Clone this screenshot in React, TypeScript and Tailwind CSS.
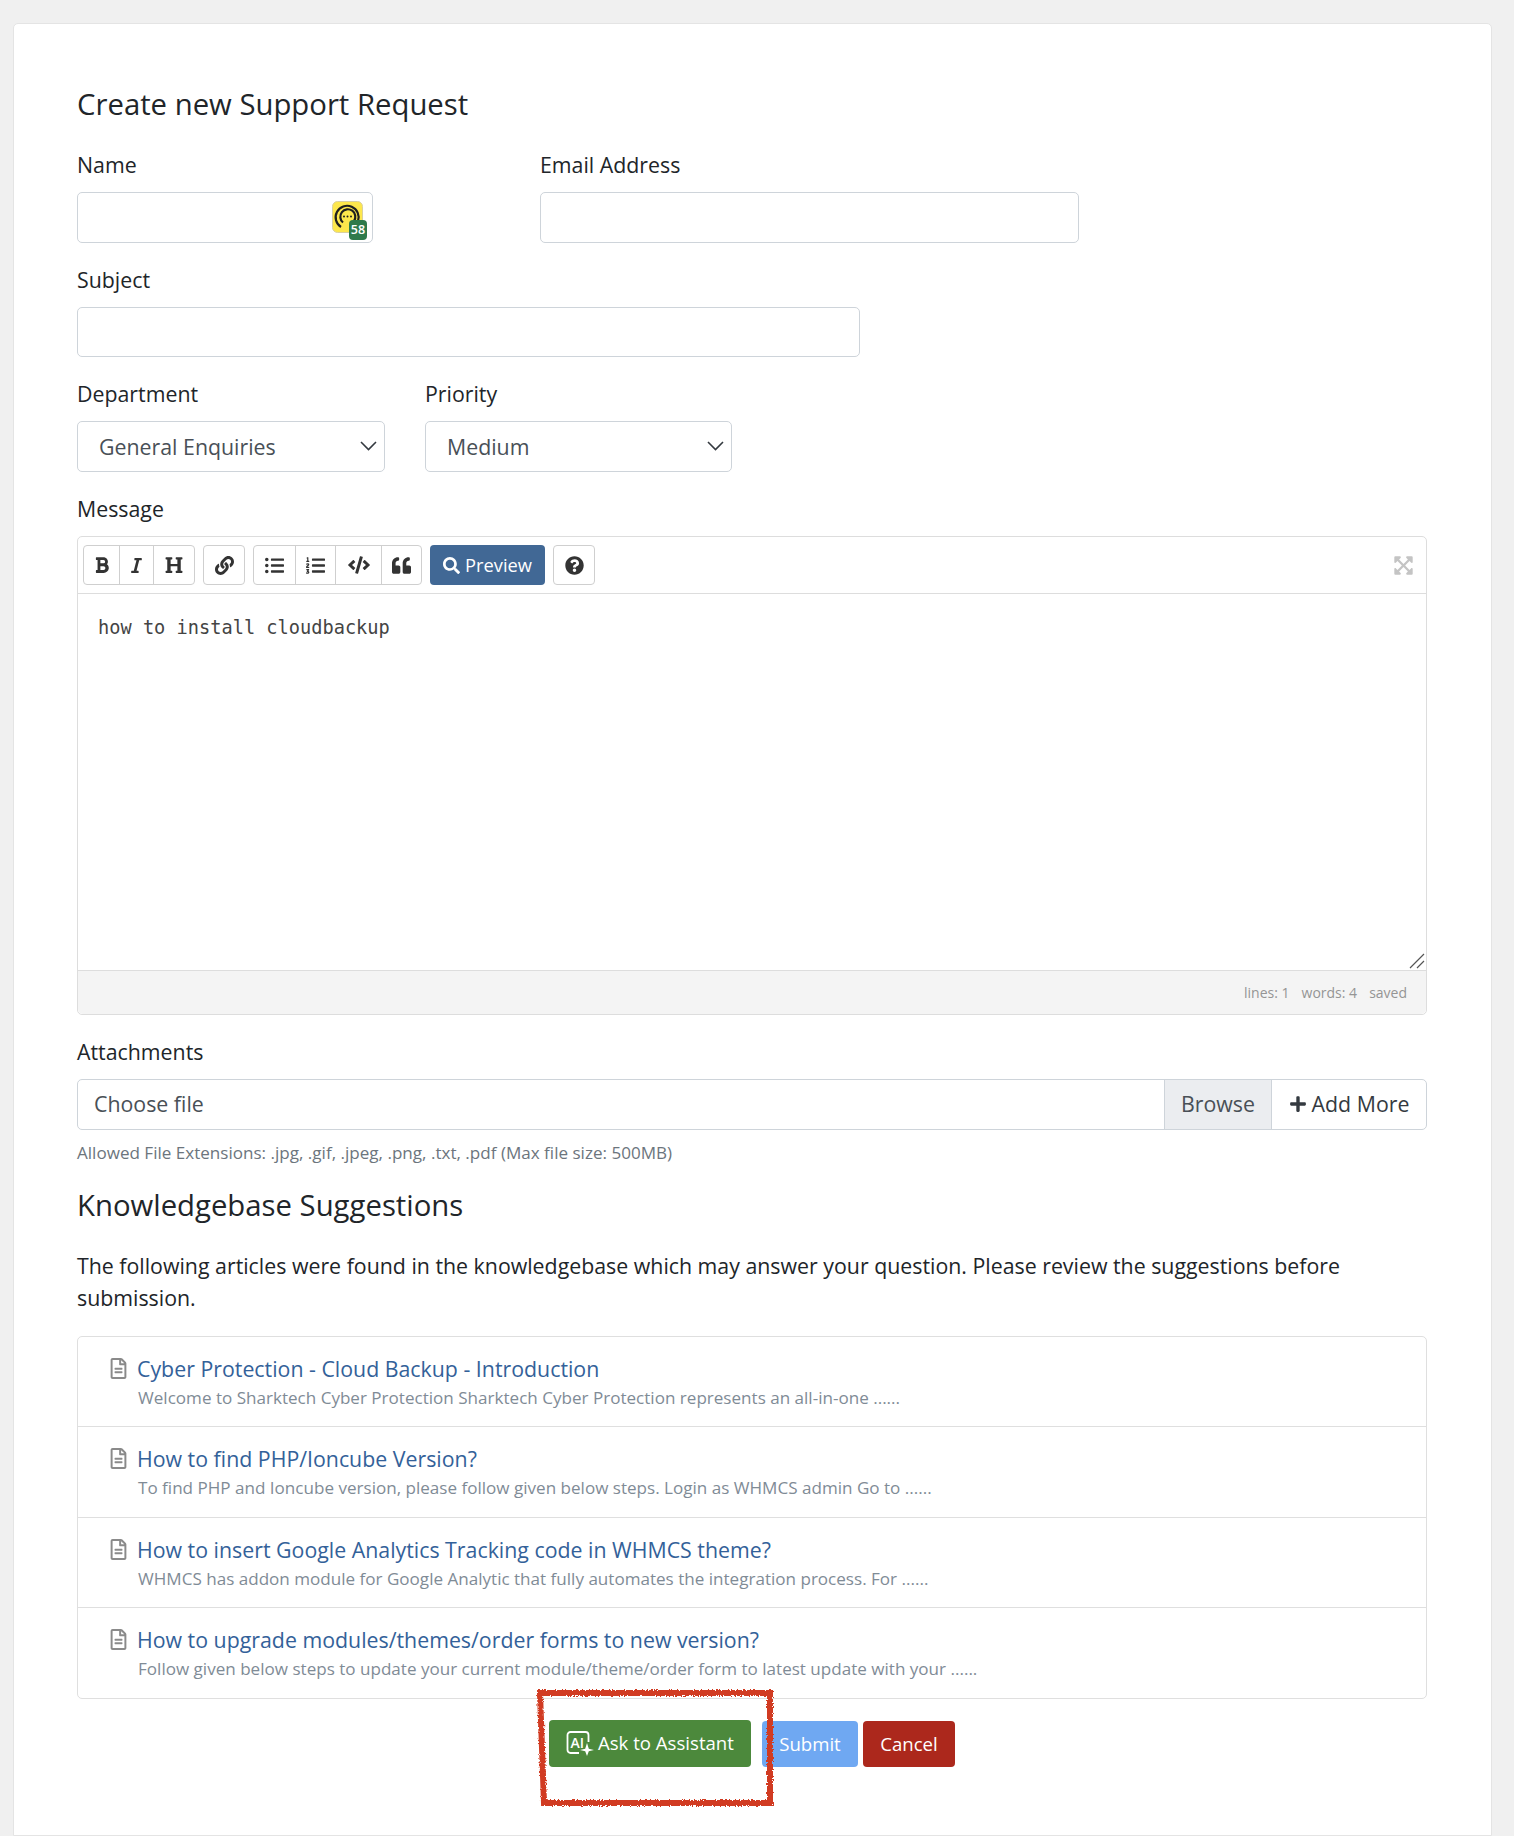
import { FaBold, FaItalic, FaHeading, FaLink, FaListUl, FaListOl, FaCode, FaQuoteLeft, FaSearch, FaQuestionCircle, FaExpandArrowsAlt, FaPlus, FaRegFileAlt } from "react-icons/fa";
import type { ReactNode } from "react";

const ARTICLES = [
  {
    title: "Cyber Protection - Cloud Backup - Introduction",
    desc: "Welcome to Sharktech Cyber Protection Sharktech Cyber Protection represents an all-in-one ......",
  },
  {
    title: "How to find PHP/Ioncube Version?",
    desc: "To find PHP and Ioncube version, please follow given below steps. Login as WHMCS admin Go to ......",
  },
  {
    title: "How to insert Google Analytics Tracking code in WHMCS theme?",
    desc: "WHMCS has addon module for Google Analytic that fully automates the integration process. For ......",
  },
  {
    title: "How to upgrade modules/themes/order forms to new version?",
    desc: "Follow given below steps to update your current module/theme/order form to latest update with your ......",
  },
];

function Label({ children }: { children: ReactNode }) {
  return <label className="mb-[11px] block h-[32px] text-[21.33px] leading-[32px] text-[#212529]">{children}</label>;
}

function Select({ value }: { value: string }) {
  return (
    <div className="flex h-[51px] items-center justify-between rounded-[5px] border border-[#ced4da] bg-white pl-[21px] pr-[7px] text-[21.33px] text-[#495057]">
      <span>{value}</span>
      <svg width="17" height="10" viewBox="0 0 17 10" fill="none" className="mb-[2px]">
        <path d="M1 1 L8.5 8.5 L16 1" stroke="#343a40" strokeWidth="1.6" />
      </svg>
    </div>
  );
}

function ToolButton({ children, className = "" }: { children: ReactNode; className?: string }) {
  return (
    <span className={`flex h-full items-center justify-center border-r border-[#cfcfcf] text-[#333] last:border-r-0 ${className}`}>
      {children}
    </span>
  );
}

function ToolGroup({ children, className = "" }: { children: ReactNode; className?: string }) {
  return <div className={`flex h-[40px] rounded-[4px] border border-[#cfcfcf] bg-white ${className}`}>{children}</div>;
}

function Toolbar() {
  return (
    <div className="flex h-[57px] items-center border-b border-[#dddddd] pl-[5px] pr-[12px]">
      <ToolGroup>
        <ToolButton className="w-[36px]"><FaBold className="size-[18px]" /></ToolButton>
        <ToolButton className="w-[34px]"><FaItalic className="size-[17px]" /></ToolButton>
        <ToolButton className="w-[40px]"><FaHeading className="size-[18px]" /></ToolButton>
      </ToolGroup>
      <ToolGroup className="ml-[8px]">
        <ToolButton className="w-[40px]"><FaLink className="size-[19px]" /></ToolButton>
      </ToolGroup>
      <ToolGroup className="ml-[8px]">
        <ToolButton className="w-[42px]"><FaListUl className="size-[19px]" /></ToolButton>
        <ToolButton className="w-[40px]"><FaListOl className="size-[19px]" /></ToolButton>
        <ToolButton className="w-[46px]"><FaCode className="size-[22px]" /></ToolButton>
        <ToolButton className="w-[39px]"><FaQuoteLeft className="size-[19px]" /></ToolButton>
      </ToolGroup>
      <div className="ml-[8px] flex h-[40px] w-[115px] items-center justify-center gap-[5px] rounded-[4px] bg-[#416895] text-[18.3px] text-white">
        <FaSearch className="size-[17px]" />
        <span>Preview</span>
      </div>
      <ToolGroup className="ml-[8px]">
        <ToolButton className="w-[40px]"><FaQuestionCircle className="size-[19px]" /></ToolButton>
      </ToolGroup>
      <FaExpandArrowsAlt className="ml-auto size-[21px] text-[#c4c4c4]" />
    </div>
  );
}

function Editor() {
  return (
    <div className="rounded-[5px] border border-[#dddddd]">
      <Toolbar />
      <div className="relative h-[376px] bg-white pl-[20px] pt-[18px] font-['DejaVu_Sans_Mono',monospace] text-[18.65px] leading-[32px] text-[#444]">
        how to install cloudbackup
        <svg className="absolute bottom-[1px] right-[1px]" width="16" height="16" viewBox="0 0 16 16">
          <path d="M1 15 L15 1 M8 15 L15 8" stroke="#555" strokeWidth="1.2" fill="none" />
        </svg>
      </div>
      <div className="flex h-[44px] items-center justify-end gap-[12px] rounded-b-[5px] border-t border-[#dddddd] bg-[#f4f4f4] pr-[19px] text-[14px] text-[#959595]">
        <span>lines: 1</span>
        <span>words: 4</span>
        <span>saved</span>
      </div>
    </div>
  );
}

function Attachments() {
  return (
    <div className="flex h-[51px] rounded-[5px] border border-[#ced4da] text-[21.33px]">
      <span className="flex flex-1 items-center pb-[1px] pl-[16px] text-[#495057]">Choose file</span>
      <span className="flex w-[108px] items-center justify-center border-x border-[#ced4da] bg-[#ebedf0] pb-[1px] text-[#495057]">Browse</span>
      <span className="flex w-[154px] items-center justify-center gap-[5px] pb-[1px] text-[#343a40]">
        <FaPlus className="size-[18px]" />
        Add More
      </span>
    </div>
  );
}

function ArticleList() {
  return (
    <div className="rounded-[5px] border border-[#dfdfdf]">
      {ARTICLES.map((a) => (
        <div key={a.title} className="flex h-[90.25px] gap-[8px] border-b border-[#dfdfdf] pl-[30px] pt-[17px] last:border-b-0">
          <FaRegFileAlt className="mt-[4px] size-[21px] shrink-0 text-[#8a8a8a]" />
          <div>
            <div className="text-[21.33px] leading-[30px] text-[#336199]">{a.title}</div>
            <div className="mt-[2px] pl-[1px] text-[17.07px] leading-[24px] text-[#7f8b96]">{a.desc}</div>
          </div>
        </div>
      ))}
    </div>
  );
}

function AiIcon() {
  return (
    <svg width="28" height="25" viewBox="0 0 28 25" fill="none" className="shrink-0">
      <path d="M13 22 H4.5 a3 3 0 0 1 -3 -3 V4 a3 3 0 0 1 3 -3 H19.5 a3 3 0 0 1 3 3 V11" stroke="#fff" strokeWidth="1.8" />
      <text x="4.5" y="16.5" fontSize="14" fontWeight="600" fill="#fff" fontFamily="Open Sans, sans-serif">AI</text>
      <path d="M21 12 L22.8 17.7 L28 19 L22.8 20.3 L21 25 L19.2 20.3 L14 19 L19.2 17.7 Z" fill="#fff" />
    </svg>
  );
}

function PluginBadge() {
  return (
    <div className="absolute right-[5px] top-[8px] h-[39px] w-[35px]">
      <svg width="31" height="32" viewBox="0 0 31 32" className="absolute left-0 top-0">
        <rect x="0.5" y="0.5" width="30" height="31" rx="5" fill="#fde74c" stroke="#d9d0a0" />
        <path d="M9 26 A11.5 11.5 0 1 1 26 20" fill="none" stroke="#1f1f1f" strokeWidth="2.2" />
        <path d="M11 21.5 A7.5 7.5 0 1 1 22 20" fill="none" stroke="#1f1f1f" strokeWidth="2.2" />
        <circle cx="12" cy="15.5" r="1" fill="#1f1f1f" />
        <circle cx="15.5" cy="15.5" r="1" fill="#1f1f1f" />
        <circle cx="19" cy="15.5" r="1" fill="#1f1f1f" />
      </svg>
      <span className="absolute bottom-0 right-0 flex h-[20px] w-[18px] items-center justify-center rounded-[4px] bg-[#2f7a4b] text-[12.5px] font-semibold leading-none text-white">
        58
      </span>
    </div>
  );
}

/* hand drawn red marker box around the assistant button */
function MarkerBox() {
  return (
    <svg className="pointer-events-none absolute left-[458px] top-[-32px]" width="240" height="122" viewBox="0 0 240 122" fill="none">
      <filter id="rough" x="-5%" y="-5%" width="110%" height="110%">
        <feTurbulence type="fractalNoise" baseFrequency="0.7" numOctaves="2" seed="4" />
        <feDisplacementMap in="SourceGraphic" scale="4" />
      </filter>
      <path d="M5 5 H235 V115 H9 Z" stroke="#d13a20" strokeWidth="6" filter="url(#rough)" />
    </svg>
  );
}

function Actions() {
  return (
    <div className="relative mt-[21px] flex h-[120px] items-start pl-[472px] text-[18.6px] text-white">
      <span className="flex h-[47px] w-[202px] items-center gap-[4px] rounded-[4px] bg-[#4c893c] pb-[1px] pl-[17px]">
        <AiIcon />
        Ask to Assistant
      </span>
      <span className="ml-[11px] mt-[1px] flex h-[46px] w-[96px] items-center justify-center rounded-[4px] bg-[#6fa8f2]">Submit</span>
      <span className="ml-[5px] mt-[1px] flex h-[46px] w-[92px] items-center justify-center rounded-[4px] bg-[#ac281c]">Cancel</span>
      <MarkerBox />
    </div>
  );
}

export default function App() {
  return (
    <div className="h-[1836px] overflow-hidden bg-[#f0f0f0] pl-[13px] pr-[22px] pt-[23px] font-['Open_Sans',sans-serif]">
      <div className="h-full rounded-t-[5px] border border-[#e4e4e4] bg-white pl-[63px] pr-[64px] pt-[59px]">
        <h3 className="mb-[24px] text-[29.3px] leading-[42px] text-[#212529]">Create new Support Request</h3>

        <div className="flex gap-[167px]">
          <div className="w-[296px]">
            <Label>Name</Label>
            <div className="relative h-[51px] rounded-[5px] border border-[#ced4da]">
              <PluginBadge />
            </div>
          </div>
          <div className="w-[539px]">
            <Label>Email Address</Label>
            <div className="h-[51px] rounded-[5px] border border-[#ced4da]" />
          </div>
        </div>

        <div className="mt-[21px] w-[783px]">
          <Label>Subject</Label>
          <div className="h-[50px] rounded-[5px] border border-[#ced4da]" />
        </div>

        <div className="mt-[21px] flex gap-[40px]">
          <div className="w-[308px]">
            <Label>Department</Label>
            <Select value="General Enquiries" />
          </div>
          <div className="w-[307px]">
            <Label>Priority</Label>
            <Select value="Medium" />
          </div>
        </div>

        <div className="mt-[21px]">
          <Label>Message</Label>
          <Editor />
        </div>

        <div className="mt-[21px]">
          <Label>Attachments</Label>
          <Attachments />
        </div>

        <p className="mt-[11px] text-[17.07px] leading-[24px] text-[#6c757d]">
          Allowed File Extensions: .jpg, .gif, .jpeg, .png, .txt, .pdf (Max file size: 500MB)
        </p>

        <h3 className="mt-[19px] text-[29.3px] leading-[42px] text-[#212529]">Knowledgebase Suggestions</h3>

        <p className="mt-[24px] text-[21.33px] leading-[32px] text-[#212529]">
          The following articles were found in the knowledgebase which may answer your question. Please review the suggestions before submission.
        </p>

        <div className="mt-[22px]">
          <ArticleList />
        </div>

        <Actions />
      </div>
    </div>
  );
}
